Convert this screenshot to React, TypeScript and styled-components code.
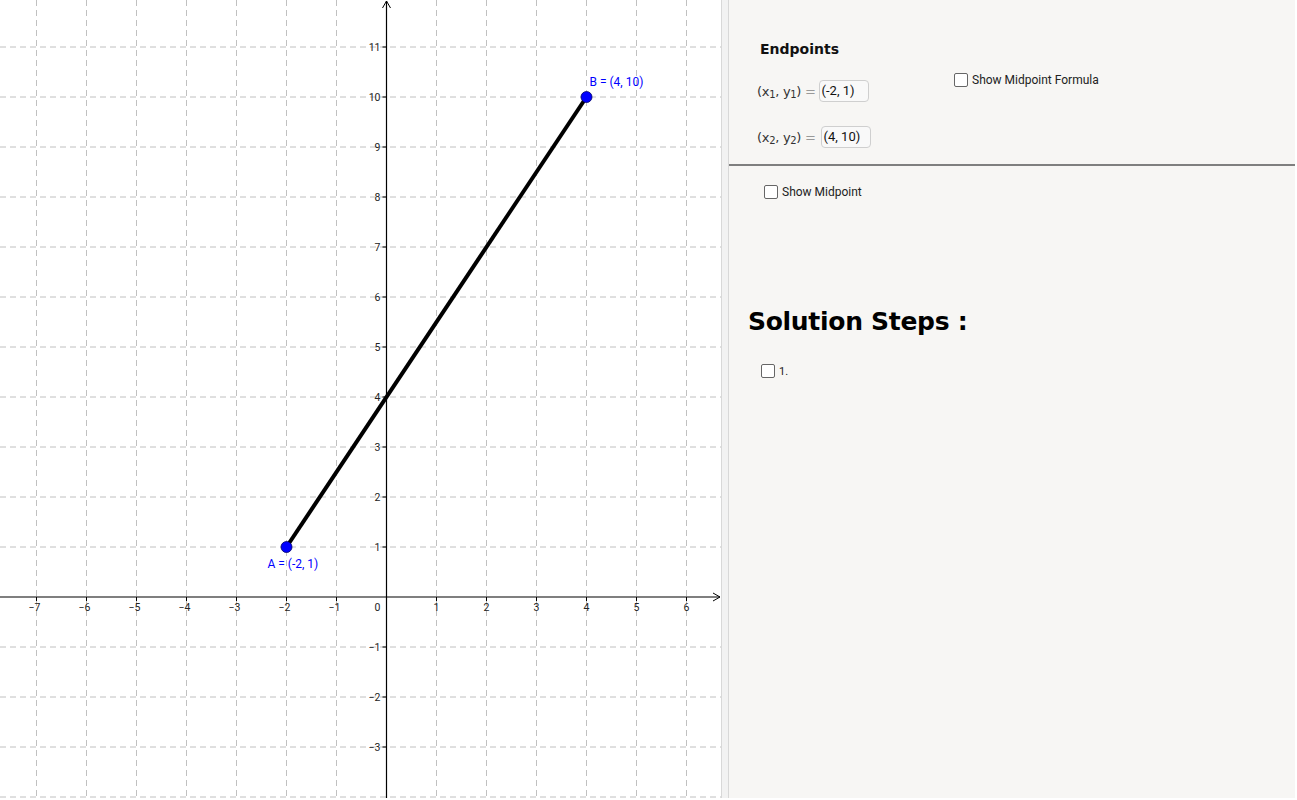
import React from 'react';
import styled, { createGlobalStyle } from 'styled-components';

const GlobalStyle = createGlobalStyle`
  html, body {
    margin: 0;
    padding: 0;
    background: #ffffff;
    font-family: Roboto, "Liberation Sans", sans-serif;
  }
`;

const W = 721;
const H = 798;
const OX = 386.5;
const OY = 597;
const U = 50;

const sx = (x: number) => OX + x * U;
const sy = (y: number) => OY - y * U;

const minus = (n: number) => (n < 0 ? '\u2212' + Math.abs(n) : String(n));

const Graph = () => {
  const xs: number[] = [];
  for (let k = -7; k <= 6; k++) xs.push(k);
  const ys: number[] = [];
  for (let k = -4; k <= 11; k++) ys.push(k);

  return (
    <svg width={W} height={H} viewBox={`0 0 ${W} ${H}`}>
      {xs.map((k) =>
        k === 0 ? null : (
          <line key={'gx' + k} x1={sx(k)} y1={0} x2={sx(k)} y2={H} stroke="#c0c0c0" strokeDasharray="6 4" />
        )
      )}
      {ys.map((k) =>
        k === 0 ? null : (
          <line key={'gy' + k} x1={0} y1={sy(k)} x2={W} y2={sy(k)} stroke="#c0c0c0" strokeDasharray="6 4" />
        )
      )}
      {/* axes */}
      <line x1={0} y1={OY} x2={W - 1} y2={OY} stroke="#000" strokeWidth={1.2} />
      <line x1={OX} y1={1} x2={OX} y2={H} stroke="#000" strokeWidth={1.2} />
      <polyline points={`${W - 8},${OY - 4} ${W - 1},${OY} ${W - 8},${OY + 4}`} fill="none" stroke="#000" />
      <polyline points={`${OX - 4},${8} ${OX},${1} ${OX + 4},${8}`} fill="none" stroke="#000" />
      {xs.map((k) =>
        k === 0 ? null : (
          <line key={'tx' + k} x1={sx(k)} y1={OY} x2={sx(k)} y2={OY + 4} stroke="#000" />
        )
      )}
      {ys.map((k) =>
        k === 0 || k === -4 ? null : (
          <line key={'ty' + k} x1={OX - 4} y1={sy(k)} x2={OX} y2={sy(k)} stroke="#000" />
        )
      )}
      <g fontFamily="Roboto, 'Liberation Sans', sans-serif" fontSize={10.5} fill="#222">
        {xs.map((k) =>
          k === 0 ? null : (
            <text key={'lx' + k} x={sx(k) + (k < 0 ? -2 : 0)} y={OY + 14} textAnchor="middle">
              {minus(k)}
            </text>
          )
        )}
        <text x={OX - 6} y={OY + 14} textAnchor="end">0</text>
        {ys.map((k) =>
          k === 0 || k === -4 ? null : (
            <text key={'ly' + k} x={OX - 6} y={sy(k) + 4} textAnchor="end">
              {minus(k)}
            </text>
          )
        )}
      </g>
      {/* segment AB */}
      <line x1={sx(-2)} y1={sy(1)} x2={sx(4)} y2={sy(10)} stroke="#000" strokeWidth={4} />
      <circle cx={sx(-2)} cy={sy(1)} r={5.5} fill="#0000ff" stroke="#000066" strokeWidth={0.8} />
      <circle cx={sx(4)} cy={sy(10)} r={5.5} fill="#0000ff" stroke="#000066" strokeWidth={0.8} />
      <g fontFamily="Roboto, 'Liberation Sans', sans-serif" fontSize={12} fill="#0000ff">
        <text x={sx(4) + 3} y={sy(10) - 11}>B = (4, 10)</text>
        <text x={sx(-2) - 19} y={sy(1) + 21}>A = (-2, 1)</text>
      </g>
    </svg>
  );
};

export default function App() {
  return (
    <>
      <GlobalStyle />
      <Page>
        <GraphicsPane>
          <Graph />
        </GraphicsPane>
        <Splitter />
        <SidePane>
          <TopSection>
            <EndpointsBlock>
              <Heading>Endpoints</Heading>
              <MathRow $first>
                <MathLabel>
                  (x<sub>1</sub>, y<sub>1</sub>) <Eq>=</Eq>
                </MathLabel>
                <InputBox>(-2, 1)</InputBox>
              </MathRow>
              <MathRow>
                <MathLabel>
                  (x<sub>2</sub>, y<sub>2</sub>) <Eq>=</Eq>
                </MathLabel>
                <InputBox>(4, 10)</InputBox>
              </MathRow>
            </EndpointsBlock>
            <CheckRow $top={72}>
              <Box />
              <CheckText>Show Midpoint Formula</CheckText>
            </CheckRow>
          </TopSection>
          <Rule />
          <BottomSection>
            <CheckRow $left={35} $top={18}>
              <Box />
              <CheckText>Show Midpoint</CheckText>
            </CheckRow>
            <BigTitle>Solution Steps :</BigTitle>
            <CheckRow $left={32} $top={25}>
              <Box />
              <CheckText $small>1.</CheckText>
            </CheckRow>
          </BottomSection>
        </SidePane>
      </Page>
    </>
  );
}

const Page = styled.div`
  display: flex;
  width: 1297px;
  height: 800px;
  overflow: hidden;
  background: #ffffff;
`;

const GraphicsPane = styled.div`
  width: 721px;
  height: 798px;
  flex: none;
  background: #ffffff;
  svg {
    display: block;
  }
`;

const Splitter = styled.div`
  width: 6px;
  height: 798px;
  flex: none;
  background: #f2f2f2;
  border-left: 1px solid #d8d8d8;
  border-right: 1px solid #d8d8d8;
`;

const SidePane = styled.div`
  width: 566px;
  height: 798px;
  flex: none;
  background: #f7f6f4;
  display: flex;
  flex-direction: column;
`;

const TopSection = styled.div`
  height: 164px;
  display: flex;
`;

const EndpointsBlock = styled.div`
  width: 225px;
  padding: 39px 0 0 28px;
  box-sizing: border-box;
  display: flex;
  flex-direction: column;
`;

const Heading = styled.div`
  font-family: "DejaVu Sans", sans-serif;
  font-weight: bold;
  font-size: 14px;
  color: #111;
  margin-left: 3px;
  height: 20px;
  line-height: 20px;
`;

const MathRow = styled.div<{ $first?: boolean }>`
  display: flex;
  align-items: center;
  margin-top: ${(p) => (p.$first ? 21 : 24)}px;
  gap: ${(p) => (p.$first ? 3 : 5)}px;
`;

const MathLabel = styled.span`
  font-family: "DejaVu Sans", sans-serif;
  font-size: 13px;
  color: #333;
  letter-spacing: -0.3px;
  sub {
    font-size: 10px;
    vertical-align: -2px;
    line-height: 0;
  }
`;

const Eq = styled.span`
  color: #999;
`;

const InputBox = styled.div`
  width: 50px;
  height: 22px;
  box-sizing: border-box;
  border: 1px solid #cfcfcf;
  border-radius: 4px;
  background: #f9f9f9;
  font-family: Roboto, "Liberation Sans", sans-serif;
  font-size: 13px;
  line-height: 18px;
  color: #111;
  padding: 1px 0 0 2px;
`;

const CheckRow = styled.div<{ $left?: number; $top?: number }>`
  display: flex;
  align-items: center;
  gap: 4px;
  height: 16px;
  margin-left: ${(p) => p.$left ?? 0}px;
  margin-top: ${(p) => p.$top ?? 0}px;
`;

const Box = styled.span`
  width: 12px;
  height: 12px;
  border: 1.5px solid #666;
  border-radius: 2px;
  background: #fff;
  flex: none;
`;

const CheckText = styled.span<{ $small?: boolean }>`
  font-family: Roboto, "Liberation Sans", sans-serif;
  font-size: ${(p) => (p.$small ? 11 : 12)}px;
  color: #222;
`;

const Rule = styled.div`
  height: 2px;
  background: #7f7f7f;
`;

const BottomSection = styled.div`
  display: flex;
  flex-direction: column;
  align-items: flex-start;
`;

const BigTitle = styled.div`
  font-family: "DejaVu Sans", sans-serif;
  font-weight: bold;
  font-size: 25px;
  color: #000;
  margin: 106px 0 0 19px;
  line-height: 32px;
  letter-spacing: -0.3px;
`;
